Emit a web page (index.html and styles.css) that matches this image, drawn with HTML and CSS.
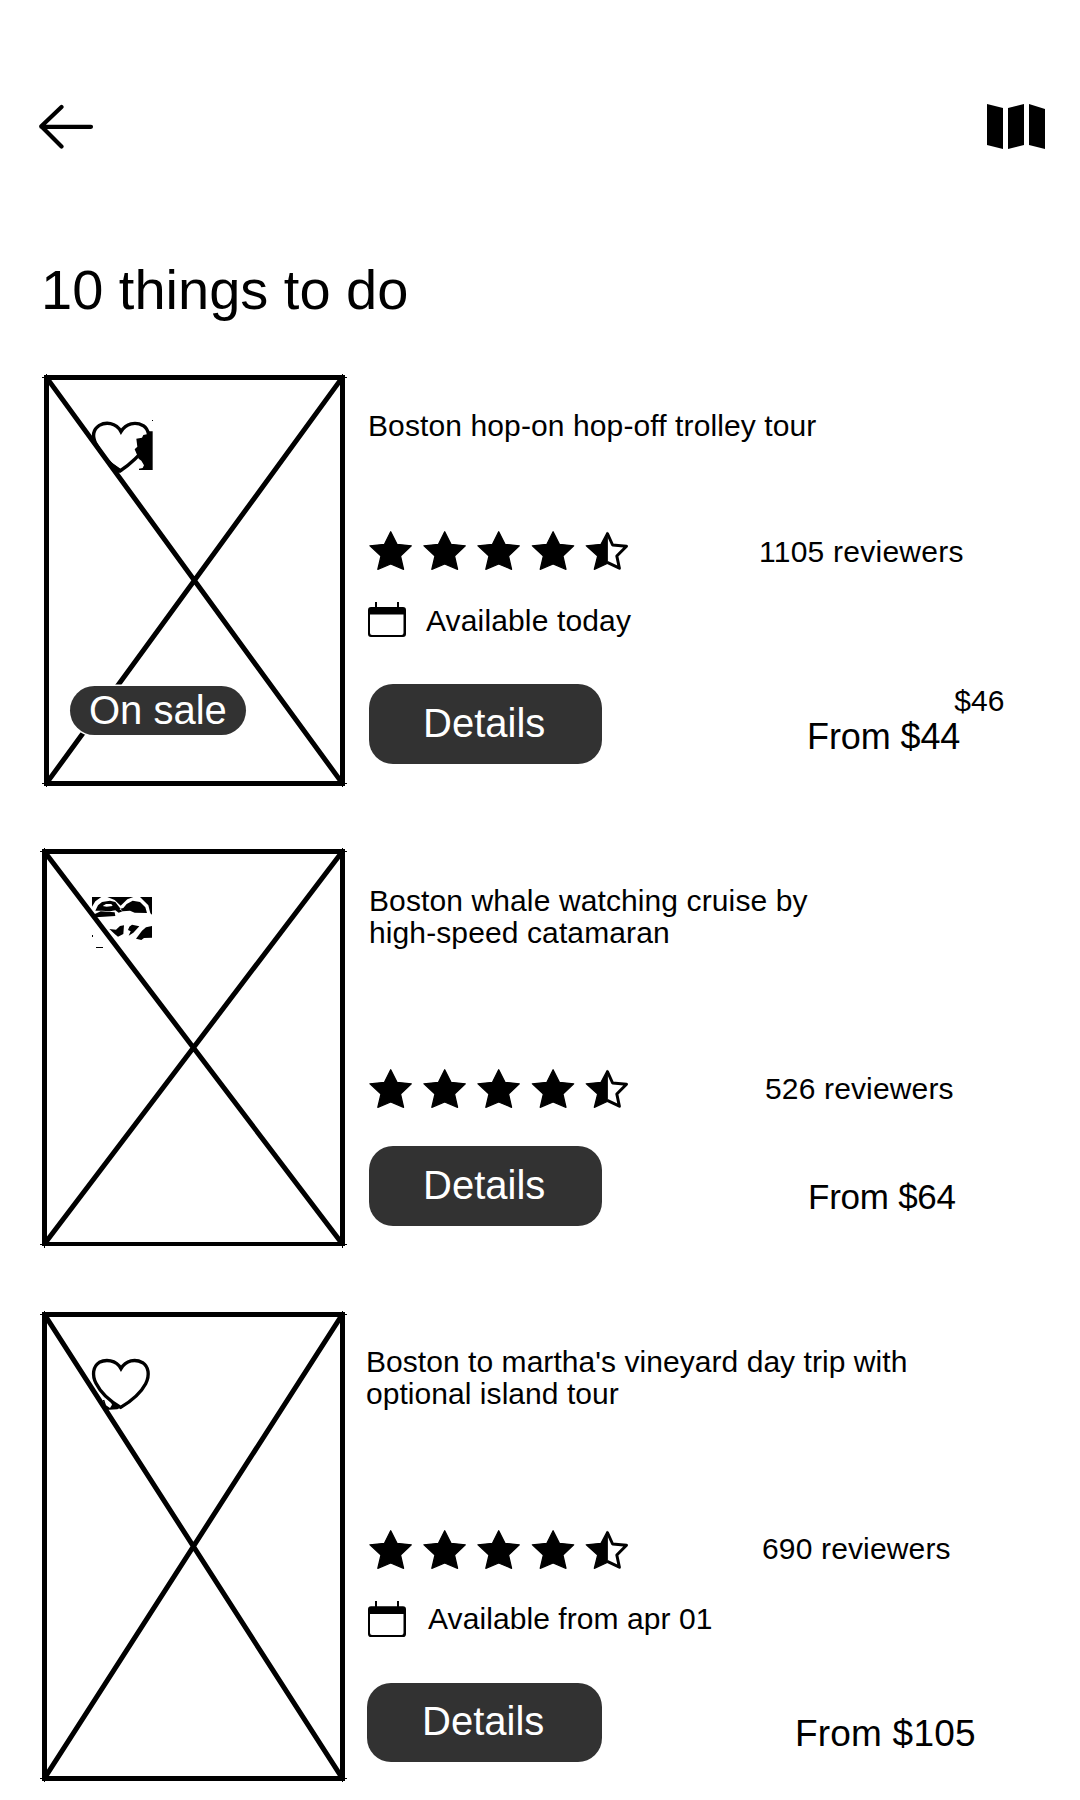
FILE: index.html
```html
<!DOCTYPE html>
<html lang="en">
<head>
<meta charset="utf-8">
<title>10 things to do</title>
<link rel="stylesheet" href="styles.css">
</head>
<body>
<svg class="defs" width="0" height="0" aria-hidden="true">
  <defs>
    <path id="star" d="M21.7 0.8 L28 13.3 L42.3 14.8 L31.5 25 L34.6 38.3 L21.7 33 L8.8 38.3 L12 25 L1 14.8 L15.5 13.3 Z"/>
    <g id="stars">
      <use href="#star" class="star"/>
      <use href="#star" class="star" x="54"/>
      <use href="#star" class="star" x="108"/>
      <use href="#star" class="star" x="162.4"/>
      <path class="star" d="M238.2 1.5 V32.5 L225.3 38.3 L228.7 25 L217.3 14.8 L232 13.3 Z"/>
      <path class="star-outline" d="M238.2 2 L243.6 14 L257.5 15.2 L247.8 25 L250.4 37.2 L238.2 31.3"/>
    </g>
    <g id="calendar">
      <path d="M7 0 H9 V5 H29 V0 H31 V5 H35 Q38 5 38 8 V32 Q38 35 35 35 H3 Q0 35 0 32 V8 Q0 5 3 5 H7 Z M2 12.6 V31 Q2 33 4 33 H33.5 Q35.5 33 35.5 31 V12.6 Z" fill-rule="evenodd"/>
    </g>
  </defs>
</svg>
<main class="screen">
  <header class="topbar">
    <svg class="back" width="56" height="45" viewBox="0 0 56 45"><path d="M52 22.8 H2.3 M22.5 3 L2.3 22.3 L22.5 42.5"/></svg>
    <svg class="map" width="58" height="45" viewBox="0 0 58 45"><path d="M0 0 L16 4 V45 L0 41 Z M21 4 L37 0 V41 L21 45 Z M42 0 L58 5 V45 L42 41 Z"/></svg>
  </header>
  <h1 class="heading">10 things to do</h1>

  <article class="card card-trolley">
    <div class="thumb">
      <svg class="frame" width="301" height="411" viewBox="0 0 301 411"><rect x="2.4" y="2.4" width="296" height="406"/><path class="cross" d="M2.4 2.4 L298.4 408.4 M298.4 2.4 L2.4 408.4"/><path class="tick" d="M-2 2.4 H303 M-2 408.4 H303 M2.4 -1 V412 M298.4 -1 V412"/></svg>
      <svg class="heart" width="90" height="90" viewBox="0 0 270 270">
        <path class="heart-line" d="M123 95 C108 66 76 66 58 76 C40 88 36 108 48 132 C64 164 90 194 120 213 C150 194 184 160 198 140 C212 112 206 88 190 77 C166 64 138 70 123 95 Z"/>
        <path d="M218 94 V210 H177 V206 L188 204 L192 196 L184 182 L176 176 L164 148 L172 140 L169 116 L186 113 L190 105 L204 102 L206 94 Z M84 180 L130 212 L112 220 Z M216 60 h3 v3 h-3 z"/>
      </svg>
      <span class="sale">On sale</span>
    </div>
    <div class="info">
      <h2 class="name">Boston hop-on hop-off trolley tour</h2>
      <div class="rating"><svg class="rate" width="260" height="40"><use href="#stars"/></svg><span class="reviews">1105 reviewers</span></div>
      <div class="avail"><svg class="cal" width="38" height="35"><use href="#calendar"/></svg><span>Available today</span></div>
      <div class="action"><button class="details">Details</button><span class="price">From $44</span><span class="old">$46</span></div>
    </div>
  </article>

  <article class="card card-whale">
    <div class="thumb">
      <svg class="frame" width="303" height="398" viewBox="0 0 303 398"><rect x="2.4" y="2.4" width="298" height="392.6"/><path class="cross" d="M2.4 2.4 L300.4 395 M300.4 2.4 L2.4 395"/><path class="tick" d="M-2 2.4 H305 M-2 395 H305 M2.4 -1 V399 M300.4 -1 V399"/></svg>
      <svg class="heart" width="90" height="80" viewBox="0 0 270 240">
        <path fill-rule="evenodd" d="M36 51 H64 L46 64 L36 80 Z M82 51 H160 L142 58 L122 77 L104 60 Z M180 51 H216 V104 L211 100 L205 76 Z M46 92 L54 76 L66 66 L90 62 L106 66 L118 82 L128 94 L116 98 L106 91 L90 94 L66 92 Z M68 78 L80 80 L98 78 L94 72 L78 72 Z M40 104 L62 94 L104 97 L106 108 L60 111 L44 112 Z M118 87 L130 84 L140 72 L158 62 L180 66 L196 82 L201 99 L164 98 L150 92 L128 94 Z M88 147 L108 149 L120 138 L132 136 L130 162 L114 170 L104 162 Z M148 140 L156 134 L178 139 L160 158 L146 167 L152 154 L144 150 Z M216 138 V173 L192 174 L184 180 L168 176 L186 152 L198 142 Z M36 165 h3 v6 h-3 z M48 201 h21 v3 h-21 z"/>
      </svg>
    </div>
    <div class="info">
      <h2 class="name">Boston whale watching cruise by<br>high-speed catamaran</h2>
      <div class="rating"><svg class="rate" width="260" height="40"><use href="#stars"/></svg><span class="reviews">526 reviewers</span></div>
      <div class="action"><button class="details">Details</button><span class="price">From $64</span></div>
    </div>
  </article>

  <article class="card card-vineyard">
    <div class="thumb">
      <svg class="frame" width="303" height="469" viewBox="0 0 303 469"><rect x="2.4" y="2.4" width="298" height="464"/><path class="cross" d="M2.4 2.4 L300.4 466.4 M300.4 2.4 L2.4 466.4"/><path class="tick" d="M-2 2.4 H305 M-2 466.4 H305 M2.4 -1 V470 M300.4 -1 V470"/></svg>
      <svg class="heart" width="90" height="90" viewBox="0 0 270 270">
        <path class="heart-line" d="M123 86 C108 58 76 58 58 67 C38 80 36 106 48 130 C62 158 90 184 122 202 C152 184 184 156 197 131 C210 106 206 80 188 68 C166 56 138 60 123 86 Z"/>
        <path d="M76 210 L72 190 L68 180 L73 180 L78 196 L90 204 L96 194 L90 180 L124 202 L112 208 Z"/>
      </svg>
    </div>
    <div class="info">
      <h2 class="name">Boston to martha's vineyard day trip with<br>optional island tour</h2>
      <div class="rating"><svg class="rate" width="260" height="40"><use href="#stars"/></svg><span class="reviews">690 reviewers</span></div>
      <div class="avail"><svg class="cal" width="38" height="36" viewBox="0 0 38 35" preserveAspectRatio="none"><use href="#calendar"/></svg><span>Available from apr 01</span></div>
      <div class="action"><button class="details">Details</button><span class="price">From $105</span></div>
    </div>
  </article>
</main>
</body>
</html>
```

FILE: styles.css
```css
* { box-sizing: border-box; }

body {
  margin: 0;
  background: #fff;
  color: #000;
  font-family: "Liberation Sans", Arial, sans-serif;
}

svg { display: block; flex: none; }
.defs { position: absolute; }

.screen {
  width: 1080px;
  height: 1800px;
  overflow: hidden;
}

.topbar {
  display: flex;
  justify-content: space-between;
  padding: 104px 35px 0 39px;
}

.back path {
  fill: none;
  stroke: #000;
  stroke-width: 4.2;
  stroke-linecap: round;
  stroke-linejoin: round;
}

.heading {
  margin: 109px 0 0 41px;
  font-size: 56px;
  font-weight: 400;
  line-height: 64px;
}

.card {
  display: flex;
  white-space: nowrap;
}

.card-trolley { height: 411px; margin: 53px 0 0 44px; }
.card-whale { height: 398px; margin: 63px 0 0 42px; }
.card-vineyard { height: 469px; margin: 65px 0 0 42px; }

.thumb { position: relative; flex: none; width: 303px; }
.card-trolley .thumb { width: 301px; }

.frame { overflow: visible; }
.frame rect, .frame path {
  fill: none;
  stroke: #000;
  stroke-width: 4.7;
}
.frame rect, .frame .tick { shape-rendering: crispEdges; }
.frame .cross { stroke-width: 5; }
.frame .tick { stroke-width: 1; }

.heart { position: absolute; left: 38px; top: 31px; }
.card-trolley .heart { left: 36px; top: 25px; }
.card-vineyard .heart { top: 28px; }
.heart-line { fill: none; stroke: #000; stroke-width: 10; }

.sale {
  position: absolute;
  left: 26px;
  top: 311px;
  width: 176px;
  height: 49px;
  padding-left: 19px;
  border-radius: 25px;
  background: #323232;
  box-shadow: 0 0 0 1.5px #fff;
  color: #fff;
  font-size: 40px;
  line-height: 49px;
}

.info { flex: 1; padding: 35px 0 0 23px; }
.card-whale .info { padding: 36px 0 0 24px; }
.card-vineyard .info { padding: 34px 0 0 21px; }

.name {
  margin: 0;
  font-size: 30px;
  font-weight: 400;
  line-height: 32px;
  letter-spacing: 0.11px;
}
.card-vineyard .name { letter-spacing: 0.05px; }

.rating, .avail, .action { display: flex; }

.rating { height: 40px; margin-top: 89px; padding-left: 1px; }
.card-whale .rating { margin-top: 120px; padding-left: 0; }
.card-vineyard .rating { margin-top: 120px; padding-left: 3px; }

.star { fill: #000; stroke: #000; stroke-width: 1.3; stroke-linejoin: round; }
.star-outline { fill: none; stroke: #000; stroke-width: 3; stroke-linejoin: round; }

.reviews {
  margin-left: 130px;
  font-size: 30px;
  line-height: 42px;
  letter-spacing: 0.25px;
}
.card-whale .reviews { margin-left: 136px; line-height: 40px; letter-spacing: 0.15px; }
.card-vineyard .reviews { margin-left: 133px; line-height: 38px; letter-spacing: 0.15px; }

.avail {
  height: 35px;
  margin-top: 31px;
  gap: 20px;
  font-size: 30px;
  line-height: 37px;
  letter-spacing: 0.14px;
}
.card-vineyard .avail { height: 36px; padding-left: 2px; gap: 22px; line-height: 35px; letter-spacing: 0.08px; }

.action { height: 80px; margin-top: 47px; padding-left: 1px; }
.card-whale .action { margin-top: 37px; padding-left: 0; }
.card-vineyard .action { height: 79px; margin-top: 46px; padding-left: 1px; }

.details {
  width: 233px;
  margin: 0;
  padding: 0 0 2px 54px;
  border: 0;
  border-radius: 24px;
  background: #323232;
  color: #fff;
  font: 40px/78px "Liberation Sans", Arial, sans-serif;
  text-align: left;
}
.card-vineyard .details { width: 235px; padding: 0 0 2px 55px; line-height: 77px; }

.price { margin: 33px 0 0 205px; font-size: 36px; line-height: 40px; letter-spacing: -0.1px; }
.card-whale .price { margin: 31px 0 0 206px; font-size: 35px; letter-spacing: -0.25px; }
.card-vineyard .price { margin: 31px 0 0 193px; font-size: 37px; letter-spacing: 0.2px; }

.old { margin: 1px 0 0 -6px; font-size: 30px; line-height: 32px; }
```
